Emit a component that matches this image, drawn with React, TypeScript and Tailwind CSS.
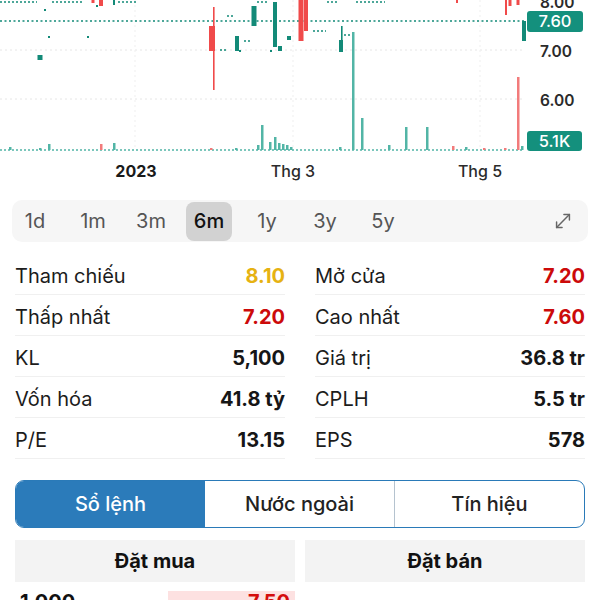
import React from "react";
import { MoveDiagonal } from "lucide-react";

const GREEN = "#138a78";
const RED = "#f04a4a";
const VOL_GREEN = "#52b5a6";
const VOL_RED = "#f27b7b";

// flat days drawn as short dashes: [y, x1, x2]
const flats: [number, number, number][] = [
  [2, 0, 37],
  [2, 52, 83],
  [2, 118, 137],
  [2, 257, 267],
  [2, 327, 337],
  [2, 356, 385],
  [50, 220, 227],
  [16, 227, 234],
  [41, 244, 251],
  [31, 313, 326],
  [35, 344, 351],
];

const dots: [number, number][] = [
  [45, 10],
  [49, 37],
  [88, 37],
  [97, 6],
  [240, 51],
  [271, 51],
];

// candles: x, top, bottom, width, color, optional wick [top, bottom]
type Candle = { x: number; t: number; b: number; w: number; up: boolean; wick?: [number, number] };
const candles: Candle[] = [
  { x: 40, t: 55, b: 60, w: 5, up: true },
  { x: 93, t: 0, b: 3, w: 3, up: false },
  { x: 101, t: 0, b: 6, w: 4, up: false },
  { x: 114, t: 0, b: 5, w: 2, up: true },
  { x: 212, t: 26, b: 51, w: 6, up: false, wick: [7, 90] },
  { x: 237, t: 36, b: 51, w: 4, up: true },
  { x: 254, t: 6, b: 26, w: 5, up: true },
  { x: 275, t: 2, b: 47, w: 4, up: true },
  { x: 280, t: 46, b: 51, w: 4, up: true },
  { x: 289, t: 36, b: 40, w: 4, up: true },
  { x: 301, t: 0, b: 41, w: 5, up: false },
  { x: 306, t: 0, b: 31, w: 4, up: false },
  { x: 341, t: 40, b: 52, w: 4, up: true, wick: [26, 52] },
  { x: 457, t: 0, b: 3, w: 2, up: false },
  { x: 506, t: 0, b: 15, w: 2, up: false },
  { x: 510, t: 0, b: 6, w: 3, up: false },
  { x: 518, t: 0, b: 5, w: 3, up: false },
  { x: 524, t: 21, b: 41, w: 4, up: true },
];

// volume bars: x, top y, up
const vols: [number, number, boolean][] = [
  [10, 147, true], [40, 148, true], [49, 144, true], [101, 144, false], [114, 143, true],
  [211, 148, false], [236, 148, true], [258, 145, true], [262, 125, true], [270, 142, true],
  [275, 137, true], [279, 143, true], [283, 144, true], [287, 145, true], [291, 147, true],
  [340, 147, true], [353, 32, true], [362, 118, true], [389, 145, true], [406, 127, true],
  [427, 127, true], [453, 146, false], [466, 147, true], [484, 148, false], [505, 148, false],
  [518, 77, false], [522, 146, true],
];

function PriceChart() {
  const font = "Inter, 'Liberation Sans', sans-serif";
  return (
    <svg width={600} height={190} className="block">
      {/* grid */}
      {[50, 99].map((y) => (
        <line key={y} x1={0} x2={522} y1={y} y2={y} stroke="#e6e6e6" strokeDasharray="2 3" />
      ))}
      {[135, 293, 480].map((x) => (
        <line key={x} x1={x} x2={x} y1={0} y2={150} stroke="#efefef" strokeDasharray="2 3" />
      ))}

      {/* last price line */}
      <line x1={0} x2={524} y1={21} y2={21} stroke={GREEN} strokeWidth={1.5} strokeDasharray="2 2.5" />

      {flats.map(([y, x1, x2], i) => (
        <line key={i} x1={x1} x2={x2} y1={y} y2={y} stroke={GREEN} strokeWidth={1.5} strokeDasharray="2 2" />
      ))}
      {dots.map(([x, y], i) => (
        <rect key={i} x={x - 1} y={y - 1} width={2} height={2} fill={GREEN} />
      ))}

      {candles.map((c, i) => (
        <g key={i} fill={c.up ? GREEN : RED}>
          {c.wick && <rect x={c.x + (c.up ? 0 : 1)} y={c.wick[0]} width={1.6} height={c.wick[1] - c.wick[0]} />}
          <rect x={c.x - c.w / 2} y={c.t} width={c.w} height={Math.max(c.b - c.t, 1.5)} />
        </g>
      ))}

      {/* volume */}
      <line x1={0} x2={524} y1={150} y2={150} stroke={VOL_GREEN} strokeWidth={1.5} strokeDasharray="2 2" />
      {vols.map(([x, y, up], i) => (
        <rect key={i} x={x - 1} y={y} width={2.5} height={150 - y} fill={up ? VOL_GREEN : VOL_RED} />
      ))}

      {/* price axis */}
      <g fontFamily={font} fontSize={15.5} fontWeight={600} fill="#2b2b2b">
        <text x={540} y={8}>8.00</text>
        <text x={540} y={57}>7.00</text>
        <text x={540} y={106}>6.00</text>
      </g>
      <rect x={527} y={11} width={56} height={21} rx={3} fill="#14907d" />
      <text x={555} y={27} textAnchor="middle" fontFamily={font} fontSize={16.5} fontWeight={500} fill="#fff">7.60</text>
      <rect x={527} y={131} width={55} height={20} rx={3} fill="#14907d" />
      <text x={554.5} y={147} textAnchor="middle" fontFamily={font} fontSize={16.5} fontWeight={500} fill="#fff">5.1K</text>

      {/* time axis */}
      <g fontFamily={font} fontSize={16} fill="#2b2b2b" textAnchor="middle">
        <text x={136} y={177} fontWeight={700} fill="#1a1a1a">2023</text>
        <text x={293} y={177} fontWeight={500}>Thg 3</text>
        <text x={480} y={177} fontWeight={500}>Thg 5</text>
      </g>
    </svg>
  );
}

const ranges = ["1d", "1m", "3m", "6m", "1y", "3y", "5y"];

const leftStats = [
  { label: "Tham chiếu", value: "8.10", color: "text-[#e6b212]" },
  { label: "Thấp nhất", value: "7.20", color: "text-[#cc0a0a]" },
  { label: "KL", value: "5,100", color: "text-[#161616]" },
  { label: "Vốn hóa", value: "41.8 tỷ", color: "text-[#161616]" },
  { label: "P/E", value: "13.15", color: "text-[#161616]" },
];

const rightStats = [
  { label: "Mở cửa", value: "7.20", color: "text-[#cc0a0a]" },
  { label: "Cao nhất", value: "7.60", color: "text-[#cc0a0a]" },
  { label: "Giá trị", value: "36.8 tr", color: "text-[#161616]" },
  { label: "CPLH", value: "5.5 tr", color: "text-[#161616]" },
  { label: "EPS", value: "578", color: "text-[#161616]" },
];

function StatColumn({ rows }: { rows: typeof leftStats }) {
  return (
    <div className="flex flex-col">
      {rows.map((r) => (
        <div key={r.label} className="flex h-[41px] items-center justify-between border-b border-[#f0f0f0] pt-[3px]">
          <span className="text-[20px] text-[#1c1c1c]">{r.label}</span>
          <span className={`text-[20px] font-bold ${r.color}`}>{r.value}</span>
        </div>
      ))}
    </div>
  );
}

export default function App() {
  return (
    <div className="h-[600px] w-[600px] overflow-hidden bg-white font-['Inter','Liberation_Sans',sans-serif]">
      <PriceChart />

      <div className="mx-[12px] mt-[10px] flex h-[42px] items-center rounded-[10px] bg-[#f6f6f6] pr-[14px]">
        <div className="flex gap-[12px]">
          {ranges.map((r) => (
            <div
              key={r}
              className={`flex h-[39px] w-[46px] items-center justify-center rounded-[8px] text-[20px] ${
                r === "6m" ? "bg-[#d2d2d2] font-medium text-[#111]" : "text-[#555]"
              }`}
            >
              {r}
            </div>
          ))}
        </div>
        <MoveDiagonal size={22} strokeWidth={1.6} className="ml-auto text-[#666]" />
      </div>

      <div className="mt-[12px] grid grid-cols-2 gap-x-[30px] px-[15px]">
        <StatColumn rows={leftStats} />
        <StatColumn rows={rightStats} />
      </div>

      <div className="mx-[15px] mt-[21px] flex h-[48px] overflow-hidden rounded-[9px] border-[1.5px] border-[#2a7ab8]">
        <div className="flex flex-1 items-center justify-center bg-[#2b7bba] text-[20px] font-medium text-white">Sổ lệnh</div>
        <div className="flex flex-1 items-center justify-center text-[20px] font-medium text-[#222]">Nước ngoài</div>
        <div className="flex flex-1 items-center justify-center border-l border-[#b5c3cf] text-[20px] font-medium text-[#222]">Tín hiệu</div>
      </div>

      <div className="mx-[15px] mt-[12px] grid grid-cols-2 gap-x-[10px]">
        <div className="flex h-[42px] items-center justify-center bg-[#f3f3f3] text-[20px] font-bold text-[#111]">Đặt mua</div>
        <div className="flex h-[42px] items-center justify-center bg-[#f3f3f3] text-[20px] font-bold text-[#111]">Đặt bán</div>
      </div>

      <div className="mx-[15px] mt-[9px] grid grid-cols-2 gap-x-[10px]">
        <div className="flex h-[40px]">
          <span className="pl-[5px] pt-[1px] text-[20px] font-bold leading-none text-[#111]">1,000</span>
          <div className="ml-auto flex w-[127px] justify-end bg-[#fde1e1] pr-[5px] pt-[1px] text-[20px] font-bold leading-none text-[#d40d0d]">7.50</div>
        </div>
        <div />
      </div>
    </div>
  );
}
